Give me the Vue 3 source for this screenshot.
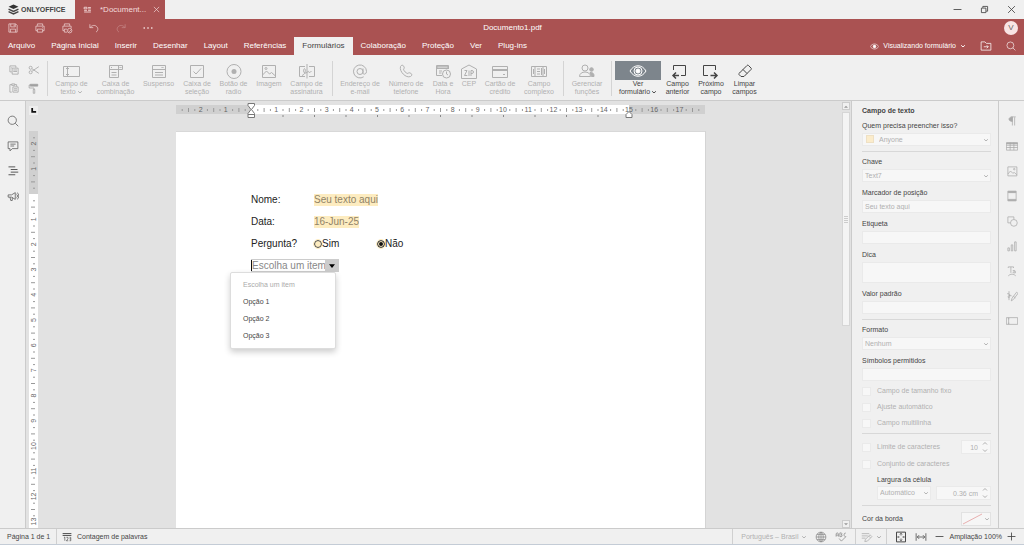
<script setup>
import { ref } from 'vue'

const CM = 25.2
const quick = ['save', 'print', 'quickprint', 'undo', 'redo', 'dots']
const quickNames = ['Salvar', 'Imprimir', 'Impressão rápida', 'Desfazer', 'Refazer', 'Mais']
const tabs = ['Arquivo', 'Página Inicial', 'Inserir', 'Desenhar', 'Layout', 'Referências', 'Formulários', 'Colaboração', 'Proteção', 'Ver', 'Plug-ins']
const groups = [
  { id: 'fields', off: true, items: [
    { icon: 'textfield', a: 'Campo de', b: 'texto', menu: true },
    { icon: 'combo', a: 'Caixa de', b: 'combinação' },
    { icon: 'dropdown', a: 'Suspenso' },
    { icon: 'check', a: 'Caixa de', b: 'seleção' },
    { icon: 'radio', a: 'Botão de', b: 'radio' },
    { icon: 'image', a: 'Imagem' },
    { icon: 'signature', a: 'Campo de', b: 'assinatura' },
  ] },
  { id: 'special', off: true, items: [
    { icon: 'at', a: 'Endereço de', b: 'e-mail' },
    { icon: 'phone', a: 'Número de', b: 'telefone' },
    { icon: 'date', a: 'Data e', b: 'Hora' },
    { icon: 'zip', a: 'CEP' },
    { icon: 'card', a: 'Cartão de', b: 'crédito' },
    { icon: 'complex', a: 'Campo', b: 'complexo' },
  ] },
  { id: 'roles', off: true, items: [{ icon: 'roles', a: 'Gerenciar', b: 'funções' }] },
  { id: 'view', off: false, items: [
    { icon: 'view', a: 'Ver', b: 'formulário', menu: true, on: true },
    { icon: 'prev', a: 'Campo', b: 'anterior' },
    { icon: 'next', a: 'Próximo', b: 'campo' },
    { icon: 'clear', a: 'Limpar', b: 'campos' },
  ] },
]
const leftIcons = [['search', 'Localizar'], ['comment', 'Comentários'], ['outline', 'Títulos'], ['feedback', 'Feedback']]
const rightIcons = [['para', 'Parágrafo'], ['table', 'Tabela'], ['pic', 'Imagem'], ['header', 'Cabeçalho'], ['shape', 'Forma'], ['chart', 'Gráfico'], ['textart', 'Arte de texto'], ['sign', 'Assinatura'], ['form', 'Formulário']]
const options = ['Opção 1', 'Opção 2', 'Opção 3']
const answer = ref('nao')

const icons = {
  save: '<path d="M2.5 2.5h9l2 2v9h-11zM5 2.5v4h6v-4M4.5 13.5v-4h7v4M9.500 3.500v2"/>',
  print: '<path d="M4.500 5V2.500h7V5M4.500 11.500h-2v-6h11v6h-2M4.500 9.500h7v4h-7zM11 7.500h1"/>',
  quickprint: '<path d="M4.500 5V2.500h7V5M4 11.500H2.500v-6h11v3M4.500 13.500v-4H8M4.500 13.500H8"/><circle cx="11.500" cy="11.500" r="3"/><path d="M10 11.500l1.200 1.200 2-2"/>',
  undo: '<path d="M2.500 3v4.500H7M2.700 7.300C5 4.500 9 3.500 11.500 6s2 5.500-.8 7.500"/>',
  redo: '<path d="M13.500 3v4.500H9M13.300 7.300C11 4.500 7 3.500 4.500 6s-2 5.500.8 7.500"/>',
  dots: '<path d="M2 8h2M7 8h2M12 8h2" stroke-width="2"/>',
  copy: '<path d="M5 10.500H2.500v-8h8V5M5.500 5.500h8v8h-8zM7 8h5M7 10h5M4 5h1"/>',
  paste: '<path d="M5 13.500H2.500v-10H5M9 3.500h2.500V6M5 2.500h4v2H5zM6.500 6.500h7v7h-7zM8 9h4M8 11h4"/>',
  cut: '<path d="M14.500 3.500L5.500 9.500M14.500 12.500L5.500 6.500"/><circle cx="3.500" cy="5" r="2"/><circle cx="3.500" cy="11" r="2"/>',
  brush: '<path d="M3 3h10v2.500H3z" fill="currentColor"/><path d="M3 4H1.500v4H8v2M7 10h2v5H7z"/>',
  textfield: '<path d="M1.500 3.500h16v10h-16zM5.500 3.500v10M4 5.500h3M4 11.500h3"/>',
  combo: '<path d="M12.500 6.500v8h-9v-12h13v4h-13M12.500 2.500v4M13.500 4l1 1 1-1M5.500 9.500h5M5.500 12h5M5 4.500h1"/>',
  dropdown: '<path d="M3.500 2.500h13v12h-13zM3.500 6.500h13M6 9.500h8M6 12h8M12.500 4l1 1 1-1"/>',
  check: '<path d="M3.500 2.500h13v12h-13zM6.500 8.500l2.500 2.500 5-5.500"/>',
  radio: '<circle cx="10" cy="8.500" r="7"/><circle cx="10" cy="8.500" r="2.500" fill="currentColor" stroke="none"/>',
  image: '<path d="M3.500 2.500h13v12h-13zM3.500 12l4-4 3 3 2-1.500 4 3.500"/><circle cx="7" cy="5.500" r="1"/>',
  signature: '<path d="M8 3.500H2.500v10H8M12 3.500h5.500v10H12M10 1v14.500M5 12.500c3-1 4-5 3-6.500s-2 2-1 3.500 3 0 4-1 .500 1.500 1.500 1 1-1 2-1"/>',
  at: '<circle cx="10" cy="8.500" r="3"/><path d="M13 5.500v4.500c0 2 3.500 1.500 3.500-1.500a6.500 6.500 0 1 0-2.800 5.300"/>',
  phone: '<path d="M4.500 3.500c1-1.500 2-2 3-.5s1 2 0 3.200c.5 2 2.300 3.800 4.300 4.300 1.200-1 1.700-1 3.200 0s1 2-.5 3C10 15.500 3 8.500 4.500 3.500z"/>',
  date: '<path d="M9 12.500H3.500v-10h12V6M3.500 5.500h12M6 8h3M6 10h2.500"/><path d="M4 3h11v2.500H4z" fill="currentColor" fill-opacity=".5"/><circle cx="13.500" cy="11" r="4"/><path d="M13.500 8.500V11l1.500 1"/>',
  zip: '<path d="M2.500 15.500V6l7.500-4 7.500 4v9.500zM5.500 7.500h2.500l-2.500 5h2.800M10 7.500v5.500M12 13V7.500h1c2 0 2 3 0 3h-1"/>',
  card: '<path d="M2.500 3.500h15v11h-15zM13 11.500h2"/><path d="M2 6h16v2H2z" fill="currentColor" stroke="none"/>',
  complex: '<path d="M6 3.500H2.500v10H6M14 3.500h3.500v10H14M6 3.500h8v10H6zM4.500 6v5M8 6h3M8 8.500h3M8 11h3M12.500 5v7M15.500 6v5"/>',
  roles: '<circle cx="8" cy="5" r="3"/><path d="M2.500 13.500c0-6 11-6 11 0z"/><circle cx="14.500" cy="6.500" r="1.800" fill="currentColor"/><path d="M13 9.500c4 0 4 2 4 4h-2.500z" fill="currentColor"/>',
  view: '<path d="M2 8c4-7 12-7 16 0-4 7-12 7-16 0z"/><circle cx="10" cy="8" r="4"/><circle cx="10" cy="8" r="2" fill="currentColor"/>',
  prev: '<path d="M5.500 7V2.500h12v10H13"/><path d="M11 12.500H5M8 9.500l-3 3 3 3" stroke-width="1.500"/>',
  next: '<path d="M7 12.500H2.500v-10h12V7"/><path d="M9.500 12.500H16M13 9.500l3 3-3 3" stroke-width="1.500"/>',
  clear: '<path d="M4.500 10l7.500-7.500c.5-.5 1-.5 1.500 0L16 5c.5.500.5 1 0 1.500l-7 7H6L4 11.500c-.4-.5-.3-1 .5-1.500zM8 6.500l4 4"/>',
  search: '<circle cx="7" cy="7" r="5.500"/><path d="M11 11l4 4"/>',
  comment: '<path d="M1.500 2.500h13v9H7l-3 3v-3H1.500zM4.500 5.500h7M4.500 8h5"/>',
  outline: '<path d="M2 2.500h9M5 6h9M5 9.500h10M2 13h9" stroke-width="1.300"/>',
  feedback: '<path d="M1.500 6.500H6l5-3v9l-5-3H1.500zM4 9.500l1 4.500h2v-4M12.500 5.500c2 1 2 4 0 5M13.500 3.500c3 2 3 7 0 9"/>',
  para: '<path d="M8.500 14V3M11.500 14V3M7 2.500h6"/><path d="M8.500 2.500c-6 0-6 6 0 6z" fill="currentColor"/>',
  table: '<path d="M.5 3.500h15v10H.5zM.5 7h15M.5 10h15M5.500 3.500v10M10.500 3.500v10"/><path d="M1 4h14v1H1z" fill="currentColor"/>',
  pic: '<path d="M2.500 2.500h12v12h-12zM2.500 12l3.500-4 3 3 2-1 3.500 3"/><circle cx="11" cy="5.500" r="1"/>',
  header: '<path d="M2.500 1.500h11v13h-11z"/><path d="M3 2h10v1.500H3zM3 12.500h10V14H3z" fill="currentColor"/>',
  shape: '<path d="M6 10.500H2.500v-8h8V6"/><circle cx="10.500" cy="10.500" r="4.500"/>',
  chart: '<path d="M2.500 10.500h2v4h-2zM7 6.500h2v8H7zM11.500 2.500h2v12h-2z"/>',
  textart: '<path d="M3 2.500h7M6.500 2.500v8M3 2.500V4M10 2.500V4M9 7.500c3-1 3.500 0 3.500 3h-2c-2 0-1.500-2 2-1.500M3 14.500c3-3 7-3 10 0"/>',
  sign: '<path d="M4 1.500v12M1.500 5C4 4 5 6 5 8.500s-3 2-2 0 4-2 5 0M7 14.500l1-3.500 6-8 2 1.500-6 8zM10 8.500l2.500 2"/>',
  form: '<path d="M.5 3.500h15v9H.5zM3.500 3.500v9M2.500 5h2M2.500 11h2"/>',
  eye: '<path d="M.5 8c3.500-6 11.500-6 15 0-3.500 6-11.500 6-15 0z"/><circle cx="8" cy="8" r="2.500" fill="currentColor"/>',
  folder: '<path d="M1.500 13.500v-11h5l2 2h6v9zM5 9h6M9 7l2 2-2 2"/>',
  count: '<path d="M1 2.500h14M1 5.500h14" stroke-width="1.500"/><path d="M4.500 8v6M3 9l1.500-1M7 8.500h2.500v2.500L7 14h3M12 8.500h2V14h-2M12 11h2"/>',
  globe: '<circle cx="8" cy="8" r="6.500"/><path d="M8 1.500v13M1.500 8h13M2.500 4.500h11M2.500 11.500h11M8 1.500c-4 3-4 10 0 13M8 1.500c4 3 4 10 0 13"/>',
  spell: '<path d="M1.500 7.500V4c0-2 3-2 3 0v3.500M1.500 5.500h3M6.500 2.500v5h1.500c2 0 2-2.500 0-2.500 2 0 1.500-2.500 0-2.500zM14.500 3c-3-1.500-3.500 5 0 4.500M5.500 10l3 3.500 6-6"/>',
  track: '<path d="M1 3.500h10M1 6.500h8M1 9.500h5M5 14l1-3 6-6 2.500 2.500-6 6zM10 6.500l2.500 2.500"/>',
  fitpage: '<path d="M2 1.500h12v13H2z" stroke-width="1.300"/><path d="M8 3v3M6.500 4.500L8 3l1.500 1.500M8 13v-3M6.500 11.500L8 13l1.500-1.500M3.500 8h2.500M12.500 8H10M4.500 7l-1 1 1 1M11.500 7l1 1-1 1"/>',
  fitwidth: '<path d="M1.500 3v10M14.500 3v10M3 8h10M5.500 5.500L3 8l2.500 2.500M10.500 5.500L13 8l-2.500 2.500"/>',
  chev: '<path d="M3 6l5 4.500L13 6" stroke-width="2.500"/>',
  minus: '<path d="M1 8h14" stroke-width="1.500"/>',
  plus: '<path d="M1 8h14M8 1v14" stroke-width="1.500"/>',
  close: '<path d="M2 2l12 12M14 2L2 14" stroke-width="1.500"/>',
  restore: '<path d="M2.500 5.500h8v8h-8zM5 5V2.500h8.500V11H11" stroke-width="1.500"/>',
  doc: '<path d="M2 4h5v3H2zM9 4.500h5M9 7h5M2 10h5M2 12.500h12M9 10h5" stroke-width="1.500"/>',
}

const hTicks = []
for (let q = -11; q <= 71; q++) {
  const x = 75 + (q * CM) / 4
  if (q === 0) continue
  hTicks.push({ x, n: q % 4 === 0 ? Math.abs(q / 4) : 0, half: q % 2 === 0 })
}
const stops = Array.from({ length: 11 }, (_, i) => 75 + (i + 1) * 31.5)
const vTicks = []
for (let q = -9; q <= 52; q++) {
  const y = 63 + (q * CM) / 4
  if (q === 0) continue
  vTicks.push({ y, n: q % 4 === 0 ? Math.abs(q / 4) : 0, half: q % 2 === 0 })
}
</script>

<template>
  <div class="app">
    <header>
      <div class="titlebar">
        <div class="brand">
          <svg class="logo" viewBox="0 0 20 20"><path d="M10 1L19 5l-9 4-9-4z" fill="#333" /><path d="M1 9.500l9 4 9-4M1 14l9 4 9-4" fill="none" stroke="#444" stroke-width="2.500" /></svg>
          ONLYOFFICE
        </div>
        <div class="doc-tab">
          <svg class="ic s9" viewBox="0 0 16 16" v-html="icons.doc" />
          <span>*Document...</span>
          <button aria-label="Fechar aba"><svg class="ic s7" viewBox="0 0 16 16" v-html="icons.close" /></button>
        </div>
        <div class="window">
          <button aria-label="Minimizar"><svg class="ic s9" viewBox="0 0 16 16" v-html="icons.minus" /></button>
          <button aria-label="Restaurar"><svg class="ic s9" viewBox="0 0 16 16" v-html="icons.restore" /></button>
          <button aria-label="Fechar"><svg class="ic s9" viewBox="0 0 16 16" v-html="icons.close" /></button>
        </div>
      </div>
      <div class="quick">
        <div class="quick-icons">
          <button v-for="(q, i) in quick" :key="q" :aria-label="quickNames[i]" :class="{ faded: q === 'redo' }"><svg class="ic s12" viewBox="0 0 16 16" v-html="icons[q]" /></button>
        </div>
        <span class="doc-name">Documento1.pdf</span>
        <button class="avatar">V</button>
      </div>
      <nav class="tabs">
        <button v-for="t in tabs" :key="t" :class="{ active: t === 'Formulários' }">{{ t }}</button>
        <div class="mode">
          <button class="mode-btn"><svg class="ic s9" viewBox="0 0 16 16" v-html="icons.eye" />Visualizando formulário<svg class="ic s6" viewBox="0 0 16 16" v-html="icons.chev" /></button>
          <button aria-label="Abrir local do arquivo"><svg class="ic s12" viewBox="0 0 16 16" v-html="icons.folder" /></button>
          <button aria-label="Pesquisar"><svg class="ic s10" viewBox="0 0 16 16" v-html="icons.search" /></button>
        </div>
      </nav>
      <div class="toolbar">
        <div class="clip">
          <button aria-label="Copiar"><svg class="ic s12" viewBox="0 0 16 16" v-html="icons.copy" /></button>
          <button aria-label="Recortar"><svg class="ic s12" viewBox="0 0 16 16" v-html="icons.cut" /></button>
          <button aria-label="Colar"><svg class="ic s12" viewBox="0 0 16 16" v-html="icons.paste" /></button>
          <button aria-label="Copiar estilo"><svg class="ic s12" viewBox="0 0 16 16" v-html="icons.brush" /></button>
        </div>
        <div v-for="g in groups" :key="g.id" class="group" :class="[g.id, { off: g.off }]">
          <button v-for="b in g.items" :key="b.icon" class="tool" :disabled="g.off">
            <span class="tool-icon" :class="{ on: b.on }"><svg class="ic big" viewBox="0 0 20 16" v-html="icons[b.icon]" /></span>
            <span>{{ b.a }}</span>
            <span v-if="b.b">{{ b.b }}<svg v-if="b.menu" class="ic s6" viewBox="0 0 16 16" v-html="icons.chev" /></span>
          </button>
        </div>
      </div>
    </header>

    <main>
      <aside class="left">
        <button v-for="[k, n] in leftIcons" :key="k" :aria-label="n"><svg class="ic s12" viewBox="0 0 16 16" v-html="icons[k]" /></button>
      </aside>

      <section class="editor">
        <button class="tabstop" aria-label="Tabulação"><svg viewBox="0 0 8 8"><path d="M2.500 1v4.500H7" fill="none" stroke="#111" stroke-width="2" /></svg></button>
        <div class="hruler">
          <svg width="529" height="17">
            <rect y="3" width="529" height="9" fill="#d0d0d0" /><rect x="75" y="3" width="378" height="9" fill="#fff" />
            <template v-for="t in hTicks" :key="t.x">
              <text v-if="t.n" :x="t.x" y="10" text-anchor="middle">{{ t.n }}</text>
              <rect v-else :x="t.x" :y="t.half ? 6 : 7" width="1" :height="t.half ? 4 : 2" fill="#999" />
            </template>
            <rect v-for="s in stops" :key="s" :x="s" y="13" width="1" height="2" fill="#888" />
            <g fill="#fff" stroke="#777"><path d="M72 1.500h6.500v2l-3 4 3 4v4H72v-4l3-4-3-4zM72 12.500h6.500" /><path d="M450 15.500v-3l3-3 3 3v3z" /></g>
          </svg>
        </div>
        <div class="vruler">
          <svg width="9" height="397">
            <rect width="9" height="63" fill="#d0d0d0" /><rect y="63" width="9" height="334" fill="#fff" />
            <template v-for="t in vTicks" :key="t.y">
              <text v-if="t.n" :transform="`translate(7 ${t.y}) rotate(-90)`" text-anchor="middle">{{ t.n }}</text>
              <rect v-else :x="t.half ? 2 : 4" :y="t.y" :width="t.half ? 4 : 2" height="1" fill="#999" />
            </template>
          </svg>
        </div>
        <div class="canvas">
          <form class="page" @submit.prevent>
            <div class="row"><label for="nome">Nome:</label><input id="nome" class="mark name" value="Seu texto aqui"></div>
            <div class="row"><label for="data">Data:</label><input id="data" class="mark date" value="16-Jun-25"></div>
            <div class="row" role="radiogroup" aria-label="Pergunta?">
              <span>Pergunta?</span>
              <label class="choice"><input v-model="answer" type="radio" name="pergunta" value="sim">Sim</label>
              <label class="choice"><input v-model="answer" type="radio" name="pergunta" value="nao">Não</label>
            </div>
            <div class="combo">
              <input aria-label="Item" value="Escolha um item"><button type="button" aria-label="Abrir lista"><svg viewBox="0 0 8 5"><path d="M0 0h8L4 5z" /></svg></button>
              <ul class="menu" role="listbox" aria-label="Opções">
                <li class="hint" role="option">Escolha um item</li>
                <li v-for="o in options" :key="o" role="option">{{ o }}</li>
              </ul>
            </div>
          </form>
        </div>
        <div class="scroll">
          <button aria-label="Rolar para cima"><svg viewBox="0 0 6 4"><path d="M0 4l3-3 3 3z" /></svg></button>
          <div class="track"><div class="thumb"><i /></div></div>
          <button aria-label="Rolar para baixo"><svg viewBox="0 0 6 4"><path d="M0 0l3 3 3-3z" /></svg></button>
        </div>
      </section>

      <aside class="panel">
        <h2>Campo de texto</h2>
        <div class="field first"><label for="who">Quem precisa preencher isso?</label>
          <div class="sel"><i class="swatch" /><select id="who" class="who" disabled><option>Anyone</option></select><svg class="ic s6" viewBox="0 0 16 16" v-html="icons.chev" /></div></div>
        <hr>
        <div class="field"><label for="key">Chave</label>
          <div class="sel"><select id="key" disabled><option>Text7</option></select><svg class="ic s6" viewBox="0 0 16 16" v-html="icons.chev" /></div></div>
        <div class="field"><label for="ph">Marcador de posição</label><input id="ph" disabled value="Seu texto aqui"></div>
        <div class="field"><label for="tag">Etiqueta</label><input id="tag" disabled></div>
        <div class="field"><label for="tip">Dica</label><textarea id="tip" disabled /></div>
        <div class="field"><label for="def">Valor padrão</label><input id="def" disabled></div>
        <hr>
        <div class="field"><label for="fmt">Formato</label>
          <div class="sel"><select id="fmt" disabled><option>Nenhum</option></select><svg class="ic s6" viewBox="0 0 16 16" v-html="icons.chev" /></div></div>
        <div class="field"><label for="sym">Símbolos permitidos</label><input id="sym" disabled></div>
        <div class="checks">
          <label><input type="checkbox" disabled>Campo de tamanho fixo</label>
          <label><input type="checkbox" disabled>Ajuste automático</label>
          <label><input type="checkbox" disabled>Campo multilinha</label>
        </div>
        <hr>
        <div class="limit">
          <label><input type="checkbox" disabled>Limite de caracteres</label>
          <div class="spin small"><input aria-label="Limite" disabled value="10"><svg class="ic" viewBox="0 0 8 14"><path d="M2 4.500l2-2 2 2M2 9.500l2 2 2-2" /></svg></div>
        </div>
        <label class="comb"><input type="checkbox" disabled>Conjunto de caracteres</label>
        <label class="cell" for="cellw">Largura da célula</label>
        <div class="cellrow">
          <div class="sel"><select id="cellw" disabled><option>Automático</option></select><svg class="ic s6" viewBox="0 0 16 16" v-html="icons.chev" /></div>
          <div class="spin"><input aria-label="Largura" disabled value="0.36 cm"><svg class="ic" viewBox="0 0 8 14"><path d="M2 4.500l2-2 2 2M2 9.500l2 2 2-2" /></svg></div>
        </div>
        <hr>
        <div class="border-row"><span>Cor da borda</span>
          <button class="color" aria-label="Cor da borda" disabled><svg viewBox="0 0 22 12"><path d="M1 11L20 1" stroke="#e8b0b0" /></svg><svg class="ic s6" viewBox="0 0 16 16" v-html="icons.chev" /></button></div>
      </aside>

      <aside class="right">
        <button v-for="[k, n] in rightIcons" :key="k" :aria-label="n" disabled><svg class="ic s12" viewBox="0 0 16 16" v-html="icons[k]" /></button>
      </aside>
    </main>

    <footer>
      <span class="pages">Página 1 de 1</span>
      <button class="count"><svg class="ic s10" viewBox="0 0 16 16" v-html="icons.count" />Contagem de palavras</button>
      <div class="lang">
        <button disabled>Português – Brasil<svg class="ic s6" viewBox="0 0 16 16" v-html="icons.chev" /></button>
        <button aria-label="Idioma" class="globe"><svg class="ic s12" viewBox="0 0 16 16" v-html="icons.globe" /></button>
        <button aria-label="Verificação ortográfica" class="globe"><svg class="ic s12" viewBox="0 0 16 16" v-html="icons.spell" /></button>
      </div>
      <button class="trackbtn" aria-label="Controlar alterações" disabled><svg class="ic s12" viewBox="0 0 16 16" v-html="icons.track" /><svg class="ic s6" viewBox="0 0 16 16" v-html="icons.chev" /></button>
      <div class="zoom">
        <button aria-label="Ajustar à página"><svg class="ic s12" viewBox="0 0 16 16" v-html="icons.fitpage" /></button>
        <button aria-label="Ajustar à largura"><svg class="ic s12" viewBox="0 0 16 16" v-html="icons.fitwidth" /></button>
        <button aria-label="Diminuir"><svg class="ic s9" viewBox="0 0 16 16" v-html="icons.minus" /></button>
        <span>Ampliação 100%</span>
        <button aria-label="Aumentar"><svg class="ic s9" viewBox="0 0 16 16" v-html="icons.plus" /></button>
      </div>
    </footer>
  </div>
</template>

<style>
body { margin: 0; background: #f0f0f0; }
</style>

<style scoped>
.app { display: flex; flex-direction: column; height: 100vh; font: 7px/10px "Liberation Sans", Arial, sans-serif; color: #444; background: #f0f0f0; overflow: hidden; }
.app * { box-sizing: border-box; }
button, input, select, textarea { font: inherit; color: inherit; background: none; border: 0; padding: 0; margin: 0; border-radius: 0; }
button { display: flex; align-items: center; justify-content: center; }
svg { display: block; flex: none; }
.ic { fill: none; stroke: currentColor; }
.s6 { width: 6px; height: 6px; }
.s7 { width: 7px; height: 7px; }
.s9 { width: 9px; height: 9px; }
.s10 { width: 10px; height: 10px; }
.s12 { width: 12px; height: 12px; }

.titlebar { display: flex; height: 19px; }
.brand { display: flex; align-items: center; gap: 2px; width: 75px; padding-left: 8px; font-weight: 700; font-size: 7px; color: #444; }
.logo { width: 11px; height: 11px; }
.doc-tab { display: flex; align-items: center; width: 90px; padding: 0 5px 0 8px; background: #aa5252; color: #f3dcdc; font-size: 8px; }
.doc-tab span { flex: 1; padding-left: 8px; }
.window { display: flex; align-items: center; gap: 18px; margin-left: auto; padding-right: 8px; }
.quick { display: grid; grid-template-columns: 1fr auto 1fr; align-items: center; height: 18px; padding: 0 6px 0 7px; background: #aa5252; color: #fff; font-size: 8px; }
.quick-icons { display: flex; gap: 15px; color: #edd3d3; }
.faded { opacity: .4; }
.avatar { justify-self: end; width: 14px; height: 14px; border-radius: 7px; background: #f8e4e4; color: #666; }
.tabs { display: flex; height: 18px; background: #aa5252; color: #fff; font-size: 8px; }
.tabs > button { padding: 0 8px; white-space: nowrap; }
.tabs > .active { background: #f0f0f0; color: #444; }
.mode { display: flex; align-items: center; gap: 14px; margin-left: auto; padding-right: 8px; font-size: 7px; }
.mode-btn { gap: 4px; }

.toolbar { display: flex; height: 46px; padding: 6px 0 4px; border-bottom: 1px solid #cbcbcb; }
.clip { display: grid; grid-template-columns: 12px 12px; gap: 6px 8px; align-content: center; padding: 0 7px 0 8px; color: #a0a0a0; }
.group { display: grid; border-left: 1px solid #d4d4d4; padding-left: 3px; margin-left: 3px; }
.group.fields { margin-left: 0; grid-template-columns: 41px 47px 39px 38px 35px 36px 39px; }
.group.special { margin-left: 6px; padding-left: 5px; grid-template-columns: 44px 48px 26px 26px 36px 42px; }
.group.roles { padding-left: 2px; grid-template-columns: 42px; }
.group.view { grid-template-columns: 46px 33px 34px 33px; }
.off { color: #b0b0b0; }
.tool { flex-direction: column; justify-content: flex-start; white-space: nowrap; line-height: 8px; }
.tool > span { display: flex; align-items: center; gap: 1px; }
.tool .tool-icon { justify-content: center; width: 100%; height: 19px; flex: none; }
.tool-icon.on { background: #7d858c; color: #fff; }
.big { width: 20px; height: 16px; stroke-width: 1; }

main { display: flex; flex: 1; min-height: 0; }
.left { display: flex; flex-direction: column; align-items: center; gap: 13px; width: 26px; padding-top: 14px; border-right: 1px solid #cbcbcb; color: #555; }
.editor { flex: 1; display: grid; grid-template: 30px 1fr / 13px 1fr 9px; min-width: 0; background: #e2e2e2; }
.tabstop { width: 9px; height: 9px; margin: 5px 0 0 3px; background: #eee; }
.tabstop svg { width: 7px; height: 7px; }
.hruler { display: flex; justify-content: center; padding-top: 1px; }
.hruler text, .vruler text { font-size: 7px; fill: #666; }
.vruler { grid-row: 2; padding-left: 3px; overflow: hidden; min-height: 0; }
.canvas { grid-area: 2 / 2; display: flex; justify-content: center; min-height: 0; }
.page { width: 529px; padding: 57px 75px 0; background: #fff; border-top: 1px solid #d8d8d8; box-shadow: 1px 0 #d4d4d4; font-size: 10px; line-height: 12px; color: #222; }
.row { display: grid; grid-template-columns: 63px 63px 63px; align-items: center; height: 22px; white-space: nowrap; }
.mark { height: 12px; background: #fdecc0; color: #918367; }
.name { width: 64px; }
.date { width: 45px; }
.choice { display: flex; align-items: center; }
.choice input { appearance: none; width: 8px; height: 8px; border: 1px solid #444; border-radius: 4px; background: #fdecc0; outline: 1px solid #fdecc0; }
.choice input:checked { background: #111; box-shadow: inset 0 0 0 1px #fdecc0; }
.combo { position: relative; display: flex; width: 88px; height: 13px; margin-top: 4px; border: 1px solid #ccc; border-left: 0; }
.combo input { flex: 1; min-width: 0; color: #888; border-left: 1px solid #111; }
.combo button { width: 13px; background: #ccc; }
.combo button svg { width: 6px; height: 4px; }
.menu { position: absolute; left: -21px; top: 12px; width: 106px; height: 77px; margin: 0; padding: 3px 0; list-style: none; background: #fff; border: 1px solid #ddd; border-radius: 2px; box-shadow: 0 3px 6px rgba(0, 0, 0, .2); font-size: 7px; color: #444; }
.menu li { height: 17px; padding-left: 12px; line-height: 18px; }
.menu .hint { color: #aaa; }
.scroll { grid-area: 1 / 3 / 3 / 4; display: flex; flex-direction: column; gap: 2px; padding-top: 1px; }
.scroll button { height: 8px; width: 8px; background: #f0f0f0; border: 1px solid #ccc; }
.scroll button svg { width: 4px; height: 3px; fill: #999; }
.track { flex: 1; width: 8px; }
.thumb { display: flex; align-items: center; justify-content: center; height: 214px; background: #f4f4f4; border: 1px solid #d6d6d6; }
.thumb i { width: 4px; height: 7px; background: repeating-linear-gradient(#ccc 0 1px, transparent 1px 2px); }

.panel { width: 147px; padding: 5px 7px 0 10px; border-left: 1px solid #cbcbcb; overflow: hidden; white-space: nowrap; }
h2 { margin: 0; font-size: 7px; line-height: 10px; }
.field { display: flex; flex-direction: column; gap: 2px; margin-bottom: 6px; }
.field.first { margin-top: 5px; }
.panel input, .panel select, .panel textarea { display: block; width: 100%; height: 13px; padding: 0 2px; background: #f7f7f7; border: 1px solid #eaeaea; color: #b0b0b0; opacity: 1; appearance: none; }
.panel textarea { height: 21px; resize: none; }
.sel { position: relative; flex: 1; color: #b0b0b0; }
.sel .ic { position: absolute; right: 2px; top: 4px; }
.swatch { position: absolute; left: 4px; top: 2px; width: 8px; height: 8px; background: #fbeccb; border: 1px solid #eee0c4; }
.panel .who { padding-left: 16px; }
hr { height: 1px; margin: 5px 0; border: 0; background: #d8d8d8; }
.field + hr { margin-top: -1px; }
.checks { display: flex; flex-direction: column; gap: 6px; margin-top: -1px; color: #b0b0b0; }
.checks label, .limit label, .comb { display: flex; align-items: center; gap: 6px; height: 10px; color: #b0b0b0; }
.panel input[type="checkbox"] { width: 9px; height: 9px; flex: none; }
.limit { display: flex; align-items: center; justify-content: space-between; margin-top: 6px; }
.spin { position: relative; width: 55px; color: #b0b0b0; }
.spin.small { width: 30px; }
.panel .spin input { height: 14px; padding-right: 12px; text-align: right; }
.spin svg { position: absolute; right: 2px; top: 0; width: 8px; height: 14px; }
.comb { margin: 5px 0 6px; }
.cell { display: block; padding-left: 15px; }
.cellrow { display: flex; gap: 5px; padding-left: 15px; margin-top: 1px; }
.cellrow select { height: 14px; }
.border-row { display: flex; align-items: center; justify-content: space-between; margin-top: 6px; }
.color { height: 14px; border: 1px solid #e2e2e2; background: #f6f6f6; color: #b0b0b0; }
.color svg:first-child { width: 22px; height: 12px; }
.right { display: flex; flex-direction: column; align-items: center; gap: 13px; width: 26px; padding-top: 14px; border-left: 1px solid #cbcbcb; color: #aaa; }

footer { display: flex; align-items: center; height: 17px; border-top: 1px solid #cbcbcb; border-bottom: 1px solid #c4ccd6; }
footer > * { align-self: stretch; display: flex; align-items: center; white-space: nowrap; }
.pages { width: 57px; padding-left: 7px; border-right: 1px solid #d0d0d0; }
.count { gap: 5px; padding-left: 5px; }
.lang { margin-left: auto; gap: 8px; padding: 0 8px; border-left: 1px solid #d0d0d0; color: #b0b0b0; }
.lang button { gap: 3px; }
.lang .globe { color: #888; }
.trackbtn { width: 31px; gap: 3px; border-left: 1px solid #d0d0d0; color: #aaa; }
.zoom { gap: 8px; padding: 0 8px; border-left: 1px solid #d0d0d0; }
.zoom span { margin: 0 -3px; }
</style>
